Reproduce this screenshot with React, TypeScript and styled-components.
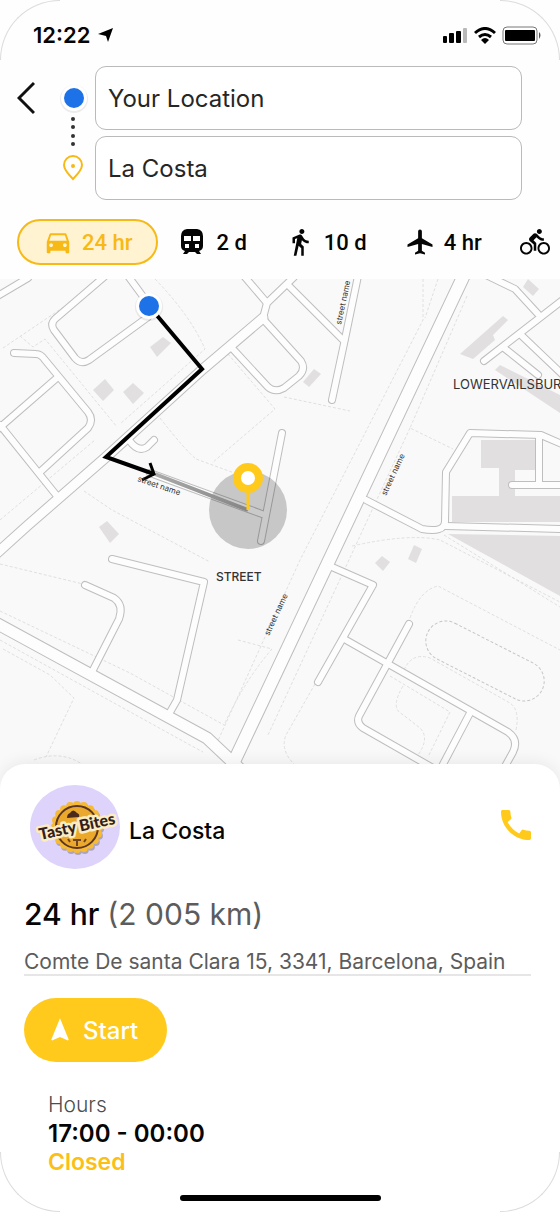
import React from "react";
import styled, { createGlobalStyle } from "styled-components";
import {
  MdCall,
  MdDirectionsBike,
  MdDirectionsCar,
  MdDirectionsWalk,
  MdLocalAirport,
  MdNavigation,
} from "react-icons/md";

const color = {
  ink: "#050505",
  text: "#262626",
  muted: "#4d4d4d",
  soft: "#5c5c5c",
  amber: "#ffca1c",
  amberDeep: "#f7b916",
  amberPale: "#fff3d1",
  blue: "#1d72e8",
  page: "#fefefe",
};

const GlobalStyle = createGlobalStyle`
  * { box-sizing: border-box; }
  body {
    margin: 0;
    background: ${color.page};
    color: ${color.ink};
    font-family: Inter, "Liberation Sans", sans-serif;
  }
  button, input { font: inherit; color: inherit; }
  button { border: 0; background: none; padding: 0; cursor: pointer; }
`;

const Screen = styled.div`
  position: relative;
  display: flex;
  flex-direction: column;
  min-height: 100vh;
  overflow: hidden;
  background: ${color.page};
`;

const Corner = styled.span<{ $v: "top" | "bottom"; $h: "left" | "right" }>`
  position: absolute;
  z-index: 3;
  width: 60px;
  height: 60px;
  pointer-events: none;
  ${({ $v, $h }) => `
    ${$v}: 0;
    ${$h}: 0;
    border-${$v}: 1px solid #dcdcdc;
    border-${$h}: 1px solid #dcdcdc;
    border-${$v}-${$h}-radius: 60px;
  `}
`;

const StatusBar = styled.div`
  display: flex;
  align-items: center;
  justify-content: space-between;
  height: 66px;
  padding: 4px 18px 0 33px;
`;

const Clock = styled.div`
  display: flex;
  align-items: center;
  gap: 8px;
  font-size: 22px;
  font-weight: 600;
  line-height: 28px;
`;

const Indicators = styled.div`
  display: flex;
  align-items: center;
  gap: 6px;
`;

const RouteForm = styled.form`
  display: flex;
  align-items: flex-start;
  padding: 0 38px 0 17px;
`;

const BackButton = styled.button`
  display: flex;
  align-items: center;
  width: 18px;
  height: 64px;
`;

const Stops = styled.div`
  display: flex;
  flex-direction: column;
  align-items: center;
  width: 28px;
  margin: 17px 7px 0 25px;
`;

const Fields = styled.div`
  display: flex;
  flex: 1;
  flex-direction: column;
  gap: 6px;
  min-width: 0;
`;

const Field = styled.input`
  width: 100%;
  height: 64px;
  padding: 0 12px;
  border: 1px solid #bababa;
  border-radius: 11px;
  background: #fff;
  color: ${color.text};
  font-size: 24px;
  outline: none;
`;

const Modes = styled.nav`
  display: flex;
  overflow: hidden;
  padding: 19px 0 14px 17px;
`;

const Mode = styled.button<{ $active?: boolean }>`
  display: flex;
  flex: none;
  align-items: center;
  gap: 9px;
  height: 46px;
  padding: 0 ${({ $active }) => ($active ? 24 : 19)}px;
  border: ${({ $active }) => ($active ? `2px solid ${color.amberDeep}` : "0")};
  border-radius: 23px;
  background: ${({ $active }) => ($active ? color.amberPale : "transparent")};
  color: ${({ $active }) => ($active ? color.amberDeep : color.ink)};
  font-family: Roboto, "Liberation Sans", sans-serif;
  font-size: 22px;
  font-weight: 500;
  white-space: nowrap;
`;

const MapArea = styled.section`
  display: flex;
  flex: 1 1 0;
  min-height: 360px;
`;

const MapCanvas = styled.svg`
  flex: 1;
  min-width: 0;
  min-height: 0;
  background: #f9f9f9;
`;

const Sheet = styled.section`
  position: relative;
  margin-top: -25px;
  padding: 21px 24px 11px;
  border-radius: 25px 25px 0 0;
  background: #fff;
  box-shadow: 0 -2px 16px rgba(0, 0, 0, 0.07);
`;

const PlaceHeader = styled.div`
  display: flex;
  align-items: center;
  gap: 9px;
  padding-left: 6px;
`;

const PlaceName = styled.h1`
  flex: 1;
  margin: 8px 0 0;
  font-size: 23px;
  font-weight: 500;
  line-height: 28px;
`;

const CallButton = styled.button`
  display: flex;
  margin-bottom: 4px;
  color: ${color.amber};
`;

const Distance = styled.p`
  margin: 27px 0 0;
  font-size: 30px;
  font-weight: 500;
  line-height: 36px;
`;

const Light = styled.span`
  color: ${color.soft};
  font-weight: 400;
`;

const Address = styled.p`
  margin: 17px 5px 0 0;
  border-bottom: 2px solid #e6e6e6;
  color: ${color.soft};
  font-size: 21px;
  font-weight: 400;
  line-height: 25px;
  white-space: nowrap;
`;

const StartButton = styled.button`
  display: flex;
  align-items: center;
  gap: 9px;
  width: 143px;
  height: 64px;
  margin-top: 22px;
  padding-left: 22px;
  border-radius: 32px;
  background: ${color.amber};
  color: #fff;
  font-size: 24px;
  font-weight: 500;
`;

const Hours = styled.dl`
  margin: 28px 0 0;
  padding-left: 24px;
  line-height: 29px;
`;

const HoursLabel = styled.dt`
  color: ${color.muted};
  font-size: 21px;
  font-weight: 300;
`;

const HoursValue = styled.dd<{ $closed?: boolean }>`
  margin: 0;
  color: ${({ $closed }) => ($closed ? "#fbbf18" : color.ink)};
  font-size: ${({ $closed }) => ($closed ? 23 : 24)}px;
  font-weight: 600;
`;

const HomeIndicator = styled.div`
  width: 201px;
  height: 6px;
  margin: 18px auto 0;
  border-radius: 3px;
  background: #000;
`;

const TrainIcon = ({ size }: { size: number }) => (
  <svg width={size} height={size} viewBox="0 0 30 30" aria-hidden="true">
    <path
      fill="currentColor"
      fillRule="evenodd"
      d="M10 2H20Q26 3 26 9V19Q26 23 22 24L24 27H20L18 25H12L10 27H6L8 24Q4 23 4 19V9Q4 3 10 2ZM7 9V14H14V9ZM16 9V14H23V9ZM8 17V21H12V17ZM18 17V21H22V17Z"
    />
  </svg>
);

const modes: { label: string; name: string; Icon: React.ComponentType<{ size: number }>; active?: boolean }[] = [
  { name: "Drive", label: "24 hr", Icon: MdDirectionsCar, active: true },
  { name: "Transit", label: "2 d", Icon: TrainIcon },
  { name: "Walk", label: "10 d", Icon: MdDirectionsWalk },
  { name: "Fly", label: "4 hr", Icon: MdLocalAirport },
  { name: "Cycle", label: "", Icon: MdDirectionsBike },
];

const minorRoads = [
  "M-4 297L28 278",
  "M104 277L55 319Q50 324 54 330L75 358Q81 365 89 360L148 317",
  "M128 276L150 306",
  "M14 353L36 354Q41 354 45 360L88 412Q94 420 88 428L40 472",
  "M58 377L-3 430",
  "M0 425L57 496",
  "M244 276L267 303",
  "M263 318L267 303L294 277",
  "M231 347L268 387Q275 393 284 388L299 376Q306 369 301 361L263 319",
  "M289 286L344 341",
  "M358 276L345 339L332 400",
  "M366 500L422 529Q444 533 445 522L446 472L470 433L541 435L564 445",
  "M539 437L539 485",
  "M512 485L564 485",
  "M446 526L564 529",
  "M488 276L515 289L538 314",
  "M564 299L484 361",
  "M504 348L538 375",
  "M521 335L564 376",
  "M112 559L204 582L177 700L169 714",
  "M85 585L114 598Q124 605 119 619L93 670",
  "M332 567L373 585L318 682",
  "M346 640L508 732Q519 740 513 752L503 770",
  "M409 624L359 716Q356 723 363 728L440 772",
  "M470 713L440 770",
  "M129 440Q138 453 147 447L154 440",
  "M282 433L261 541",
  "M150 473L262 514",
];

const majorRoads = [
  { d: "M-4 554L27 526L105 458L203 369L263 318", w: 9 },
  { d: "M465 273L222 787", w: 12 },
  { d: "M-4 623L207 738L242 771", w: 11 },
];

const buildings = [
  "150,347 163,337 171,343 157,357",
  "93,390 105,379 114,390 103,401",
  "123,392 133,383 144,393 133,404",
  "99,527 107,521 119,534 110,543",
  "303,382 314,369 321,374 309,387",
  "523,287 528,279 539,289 533,296",
  "460,354 503,316 508,320 493,335 495,340 473,359",
  "495,370 500,365 560,395 560,413",
  "481,440 536,440 536,470 515,470 515,496 560,496 560,522 452,522 452,496 499,496 499,468 481,468",
  "448,534 560,536 560,596",
  "375,563 382,556 390,562 383,571",
  "408,559 414,545 422,549 416,563",
];

const footpaths = [
  "M3 348L105 279",
  "M20 336L33 347L45 339L117 427",
  "M155 279Q190 315 205 349L120 424",
  "M0 520L95 440",
  "M160 418Q185 450 196 459L248 478",
  "M228 354L275 409L212 463",
  "M284 397L350 411",
  "M423 279L423 320L300 560L216 745",
  "M438 279L425 318",
  "M467 296L410 428L453 449",
  "M410 428L268 735",
  "M84 491L112 510L210 562",
  "M0 564L83 584",
  "M0 611L130 673L224 725",
  "M0 640L190 745L203 752",
  "M3 649L50 675L74 698L46 757",
  "M34 760Q60 750 82 764",
  "M238 640L272 649Q245 680 224 725",
  "M352 546Q410 533 440 540L560 602",
  "M444 535L560 607",
  "M410 618Q420 590 438 586L560 650",
  "M404 670Q412 652 430 658L510 703Q520 710 516 730",
  "M390 676L450 712L428 757",
  "M403 686Q390 708 402 714L420 728Q430 738 418 755",
  "M315 684L286 735Q280 750 294 764",
];

const streetLabels = [
  { x: 341, y: 325, rotate: -78 },
  { x: 386, y: 496, rotate: -65 },
  { x: 269, y: 636, rotate: -65 },
  { x: 137, y: 481, rotate: 19 },
];

const LocationDot = () => (
  <>
    <circle r="14" fill="#000" opacity="0.07" cy="1" />
    <circle r="13" fill="#fff" />
    <circle r="10" fill={color.blue} />
  </>
);

const CityMap = () => (
  <MapCanvas viewBox="0 279 560 510" preserveAspectRatio="xMidYMin slice" role="img" aria-label="Route map">
    <defs>
      <linearGradient id="ahead" x1="155" y1="475" x2="248" y2="510" gradientUnits="userSpaceOnUse">
        <stop offset="0" stopColor="#aaa" />
        <stop offset="1" stopColor="#858585" />
      </linearGradient>
    </defs>
    <g fill="none" stroke="#e0e0e0" strokeWidth="1" strokeDasharray="3 2">
      {footpaths.map((d) => (
        <path key={d} d={d} />
      ))}
      <rect x="-64" y="-20" width="128" height="40" rx="20" transform="translate(485 661) rotate(27)" stroke="#c6c6c6" />
    </g>
    <g fill="#e2dfe0">
      {buildings.map((points) => (
        <polygon key={points} points={points} />
      ))}
    </g>
    <g fill="none" strokeLinecap="round" strokeLinejoin="round">
      <g stroke="#bebebe">
        {minorRoads.map((d) => (
          <path key={d} d={d} strokeWidth="8" />
        ))}
        {majorRoads.map(({ d, w }) => (
          <path key={d} d={d} strokeWidth={w + 2} />
        ))}
      </g>
      <g stroke="#fdfdfd">
        {minorRoads.map((d) => (
          <path key={d} d={d} strokeWidth="6" />
        ))}
        {majorRoads.map(({ d, w }) => (
          <path key={d} d={d} strokeWidth={w} />
        ))}
      </g>
    </g>
    <circle cx="248" cy="510" r="39" fill="#000" opacity="0.2" />
    <g fill="none" strokeWidth="4">
      <path d="M155 474L248 510" stroke="url(#ahead)" />
      <path d="M149 306L202 369L106 457L154 474" stroke="#000" />
      <path d="M150 463L154 474L142 480" stroke="#000" strokeWidth="3" />
    </g>
    <g fill="#333" fontFamily="Inter, sans-serif">
      {streetLabels.map(({ x, y, rotate }) => (
        <text key={`${x}-${y}`} fontSize="8" transform={`translate(${x} ${y}) rotate(${rotate})`}>
          street name
        </text>
      ))}
      <text x="453" y="389" fontSize="13">LOWERVAILSBUR</text>
      <text x="216" y="581" fontSize="12" fontWeight="500">STREET</text>
    </g>
    <g transform="translate(149 306)">
      <LocationDot />
    </g>
    <path d="M248 490V510" stroke={color.amber} strokeWidth="3" />
    <circle cx="248" cy="478" r="11" fill="#fff" stroke={color.amber} strokeWidth="8" />
  </MapCanvas>
);

const scallops = Array.from({ length: 20 }, (_, i) => {
  const a = (i / 20) * Math.PI * 2;
  return { x: 47 + Math.cos(a) * 22, y: 42 + Math.sin(a) * 22 };
});

const PlaceLogo = () => (
  <svg width="90" height="84" viewBox="0 0 90 84" role="img" aria-label="Tasty Bites logo">
    <ellipse cx="45" cy="42" rx="45" ry="42" fill="#ded3fb" />
    <g fill="#8e8593" opacity="0.6" transform="translate(1 2)">
      {scallops.map(({ x, y }) => (
        <circle key={`${x}-${y}`} cx={x} cy={y} r="4" />
      ))}
    </g>
    <g fill="#f6ba35">
      {scallops.map(({ x, y }) => (
        <circle key={`${x}-${y}`} cx={x} cy={y} r="4" />
      ))}
      <circle cx="47" cy="42" r="23" />
    </g>
    <circle cx="47" cy="42" r="21" fill="#eaa92c" stroke="#5b3525" strokeWidth="2" />
    <path d="M37 33Q37 29 40 28Q43 23 47 28Q50 29 49 32Z" fill="#4a2a1c" />
    <path d="M47 54V61M43 55H51M38 54L40 57M56 54L54 57" stroke="#704524" strokeWidth="2" />
    <text
      x="47"
      y="47"
      transform="rotate(-12 47 42)"
      textAnchor="middle"
      fontFamily="Lato, sans-serif"
      fontSize="16"
      fontWeight="900"
      fill="#33201c"
      stroke="#fbecc4"
      strokeWidth="5"
      strokeLinejoin="round"
      paintOrder="stroke"
    >
      Tasty Bites
    </text>
  </svg>
);

const SignalIcon = () => (
  <svg width="26" height="18" viewBox="0 0 26 18" aria-hidden="true">
    <rect x="1" y="10" width="4" height="7" rx="1" />
    <rect x="7" y="7" width="5" height="10" rx="1" />
    <rect x="14" y="5" width="5" height="12" rx="1" />
    <rect x="21" y="2" width="4" height="15" rx="1" fill="#b9b9b9" />
  </svg>
);

const WifiIcon = () => (
  <svg width="22" height="17" viewBox="0 0 22 17" fill="none" stroke="#000" strokeWidth="3" aria-hidden="true">
    <path d="M1 6Q11 -3 21 6" />
    <path d="M5 10Q11 5 17 10" />
    <path d="M7 13Q11 9 15 13L11 17Z" fill="#000" stroke="none" />
  </svg>
);

const BatteryIcon = () => (
  <svg width="40" height="19" viewBox="0 0 40 19" aria-hidden="true">
    <rect x="1" y="1" width="34" height="17" rx="4" fill="none" stroke="#777" />
    <rect x="3" y="4" width="30" height="11" rx="1" />
    <path d="M37 6Q40 9 37 13Z" fill="#555" />
  </svg>
);

const StopMarkers = () => (
  <Stops aria-hidden="true">
    <svg width="28" height="98" viewBox="0 0 28 98">
      <g transform="translate(14 15)">
        <LocationDot />
      </g>
      <g fill="#333">
        {[36, 44, 53, 61].map((cy) => (
          <circle key={cy} cx="13" cy={cy} r="2" />
        ))}
      </g>
      <path
        d="M13 96C7 90 4 86 4 82A9 9 0 0 1 22 82C22 86 19 90 13 96Z"
        fill="none"
        stroke={color.amberDeep}
        strokeWidth="2"
      />
      <circle cx="13" cy="83" r="2" fill={color.amberDeep} />
    </svg>
  </Stops>
);

export default function App() {
  return (
    <Screen>
      <GlobalStyle />
      <Corner $v="top" $h="left" />
      <Corner $v="top" $h="right" />
      <Corner $v="bottom" $h="left" />
      <Corner $v="bottom" $h="right" />

      <StatusBar>
        <Clock>
          12:22
          <svg width="16" height="16" viewBox="0 0 16 16" aria-hidden="true">
            <path d="M15 1L10 15L8 9L0 7Z" />
          </svg>
        </Clock>
        <Indicators>
          <SignalIcon />
          <WifiIcon />
          <BatteryIcon />
        </Indicators>
      </StatusBar>

      <RouteForm>
        <BackButton type="button" aria-label="Back">
          <svg width="18" height="34" viewBox="0 0 18 34" fill="none" stroke="#111" strokeWidth="3" aria-hidden="true">
            <path d="M17 2L2 17L17 32" />
          </svg>
        </BackButton>
        <StopMarkers />
        <Fields>
          <Field aria-label="From" defaultValue="Your Location" />
          <Field aria-label="To" defaultValue="La Costa" />
        </Fields>
      </RouteForm>

      <Modes aria-label="Travel mode">
        {modes.map(({ name, label, Icon, active }) => (
          <Mode key={name} type="button" $active={active} aria-label={`${name} ${label}`} aria-pressed={!!active}>
            <Icon size={30} />
            {label}
          </Mode>
        ))}
      </Modes>

      <MapArea>
        <CityMap />
      </MapArea>

      <Sheet>
        <PlaceHeader>
          <PlaceLogo />
          <PlaceName>La Costa</PlaceName>
          <CallButton type="button" aria-label="Call La Costa">
            <MdCall size={40} />
          </CallButton>
        </PlaceHeader>
        <Distance>
          24 hr <Light>(2 005 km)</Light>
        </Distance>
        <Address>Comte De santa Clara 15, 3341, Barcelona, Spain</Address>
        <StartButton type="button">
          <MdNavigation size={28} />
          Start
        </StartButton>
        <Hours>
          <HoursLabel>Hours</HoursLabel>
          <HoursValue>17:00 - 00:00</HoursValue>
          <HoursValue $closed>Closed</HoursValue>
        </Hours>
        <HomeIndicator />
      </Sheet>
    </Screen>
  );
}
